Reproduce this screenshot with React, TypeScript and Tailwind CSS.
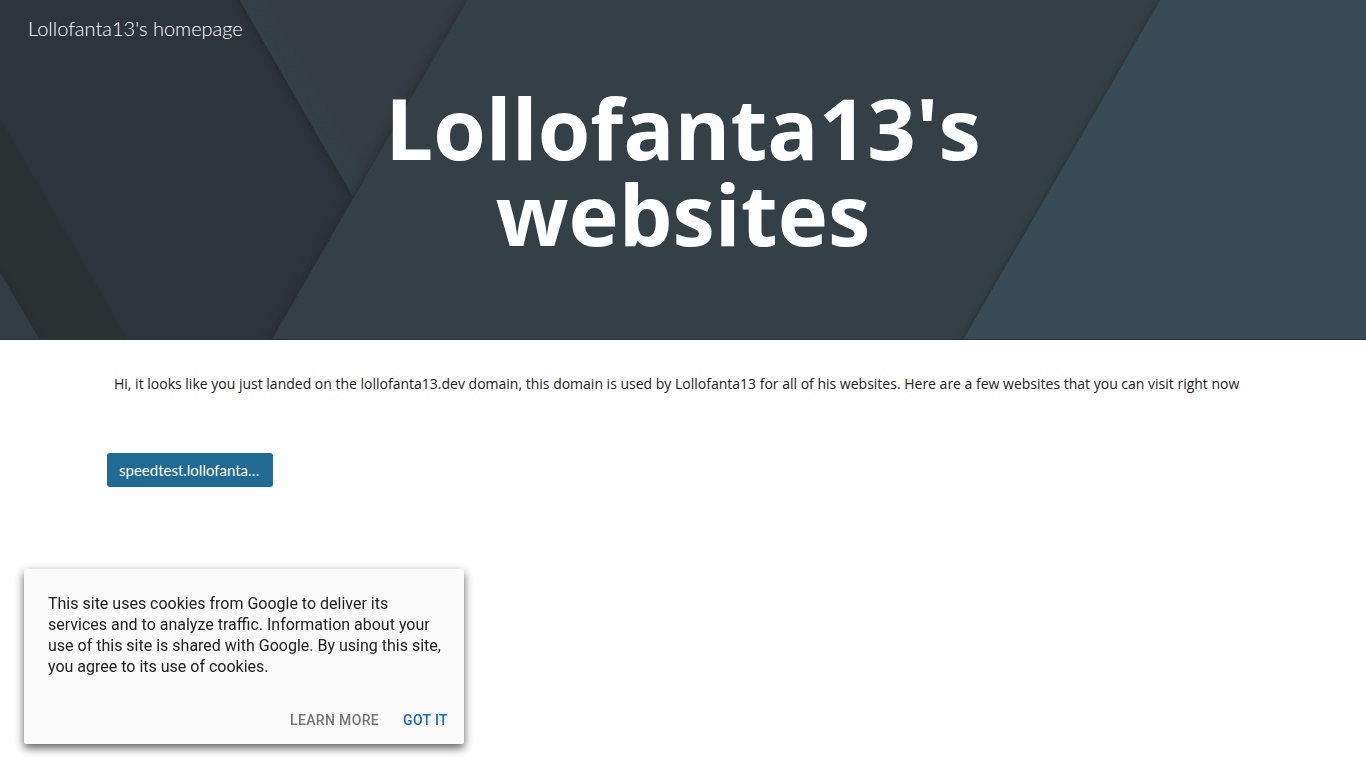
const links = [{ label: "speedtest.lollofanta13.dev", href: "#speedtest" }]

function Backdrop() {
  return (
    <svg
      className="absolute inset-0 h-full w-full"
      viewBox="0 0 1366 340"
      preserveAspectRatio="xMidYMid slice"
      aria-hidden="true"
    >
      <defs>
        <filter id="paper" x="-10%" y="-10%" width="120%" height="120%" colorInterpolationFilters="sRGB">
          <feDropShadow dx="-1" dy="1" stdDeviation="3" floodColor="#242827" floodOpacity="0.8" />
        </filter>
        <filter id="soft" x="-10%" y="-10%" width="120%" height="120%" colorInterpolationFilters="sRGB">
          <feDropShadow dx="-2" dy="0" stdDeviation="5" floodColor="#282c2c" floodOpacity="0.8" />
        </filter>
        <linearGradient id="wedge" x1="240" y1="0" x2="270" y2="-17" gradientUnits="userSpaceOnUse">
          <stop offset="0" stopColor="#344046" />
          <stop offset="1" stopColor="#353c43" />
        </linearGradient>
      </defs>
      <rect width="1366" height="340" fill="#2d343b" />
      <polygon points="0,118 128,340 0,340" fill="#2b3234" />
      <polygon points="-40,204 0,272 40,340 80,408 -40,408" fill="#333d44" filter="url(#paper)" />
      <polygon points="205,-60 506,-60 353,197" fill="url(#wedge)" filter="url(#paper)" />
      <polygon points="502,-60 1300,-60 1300,400 237,400" fill="#344045" filter="url(#soft)" />
      <polygon points="1195,-60 1430,-60 1430,400 928,400" fill="#384a53" filter="url(#paper)" />
      <rect y="339" width="1366" height="1" fill="#33313a" />
    </svg>
  )
}

function CookieNotice() {
  return (
    <aside
      aria-label="Cookie notice"
      className="fixed bottom-6 left-6 w-[440px] max-w-[calc(100%-48px)] rounded-xs bg-[#fafafa] px-2 pt-6 pb-2 font-['Roboto',sans-serif] shadow-[0_4px_10px_rgba(0,0,0,0.65)]"
    >
      <p className="pr-2 pl-4 text-base leading-[21px] text-[#212121]">
        This site uses cookies from Google to deliver its services and to analyze traffic. Information about your use of
        this site is shared with Google. By using this site, you agree to its use of cookies.
      </p>
      <div className="mt-[27px] flex justify-end gap-2 text-sm font-medium tracking-wide uppercase">
        <a href="#cookies" className="flex h-8 items-center px-2 text-[#757575]">
          Learn more
        </a>
        <button type="button" className="flex h-8 items-center px-2 uppercase text-[#1967c7]">
          Got it
        </button>
      </div>
    </aside>
  )
}

export default function App() {
  return (
    <div className="min-h-screen bg-white">
      <header className="relative flex min-h-[340px] flex-col overflow-hidden bg-[#344045] text-white">
        <Backdrop />
        <div className="relative px-7 pt-4">
          <a href="#home" className="block w-fit font-['Lato',sans-serif] text-xl leading-6 font-light">
            Lollofanta13's homepage
          </a>
        </div>
        <h1 className="relative mx-auto mt-11 max-w-3xl text-center font-['Open_Sans',sans-serif] text-[85px] leading-[86px] font-bold">
          Lollofanta13's websites
        </h1>
      </header>

      <main className="mx-auto max-w-[1152px] pt-8">
        <p className="px-[7px] font-['Open_Sans',sans-serif] text-sm leading-6 text-[#212121]">
          Hi, it looks like you just landed on the lollofanta13.dev domain, this domain is used by Lollofanta13 for all
          of his websites. Here are a few websites that you can visit right now
        </p>
        <nav className="mt-[57px] flex gap-4">
          {links.map((link) => (
            <a
              key={link.href}
              href={link.href}
              className="w-[166px] truncate rounded-[3px] bg-[#1f6b93] px-3 font-['Lato',sans-serif] text-[15px] leading-[34px] text-white"
            >
              {link.label}
            </a>
          ))}
        </nav>
      </main>

      <CookieNotice />
    </div>
  )
}
